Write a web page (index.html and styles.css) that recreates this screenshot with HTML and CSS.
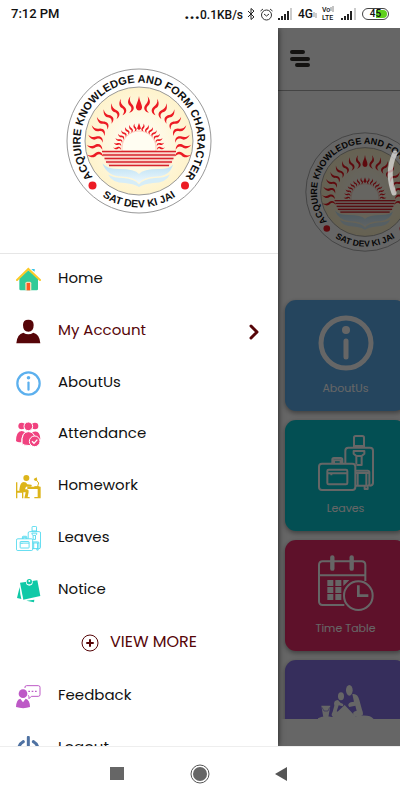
FILE: index.html
```html
<!DOCTYPE html>
<html lang="en">
<head>
<meta charset="utf-8">
<meta name="viewport" content="width=device-width, initial-scale=1">
<title>School app</title>
<link rel="stylesheet" href="styles.css">
</head>
<body>
<svg class="sprite" aria-hidden="true">
  <symbol id="info" viewBox="0 0 56 56">
    <circle cx="28" cy="28" r="25" fill="none" stroke="currentColor" stroke-width="5"/>
    <circle cx="28" cy="15" r="4" fill="currentColor"/>
    <path d="M28 26V42" stroke="currentColor" stroke-width="5" stroke-linecap="round"/>
  </symbol>
  <symbol id="luggage" viewBox="0 0 168 168">
    <g fill="none" stroke="currentColor" stroke-width="6" stroke-linejoin="round">
      <rect x="3" y="86" width="109" height="79" rx="9"/>
      <path d="M43 86V74Q43 69 48 69H68Q73 69 73 74V86M48 86V76H68V86"/>
      <rect x="28" y="104" width="60" height="44" rx="4"/><path d="M28 115H88M40 115V121"/>
      <path d="M82 84V47Q82 38 91 38H156Q165 38 165 47V144Q165 152 154 152"/>
      <path d="M108 38V8Q108 3 113 3H133Q138 3 138 8V38M108 33H138"/>
      <path d="M107 48H139V56L131 63H115L107 56ZM115 63V88M131 63V90H115"/>
      <path d="M112 107H149Q154 107 154 112V147Q154 152 149 152H112M112 114H154M119 114V152M145 114V152M140 152V162H149V152"/>
    </g>
  </symbol>
</svg>

<header class="status">
  <span>7:12 PM</span>
  <div class="status-right">
    <span class="speed"><b class="dots">...</b>0.1KB/s</span>
    <svg width="7" height="12" viewBox="0 0 7 12"><path d="M0 3L6 9L3 11.500V.5L6 3L0 9" fill="none" stroke="#222" stroke-width="1"/></svg>
    <svg width="13" height="13" viewBox="0 0 13 13" fill="none" stroke="#333"><circle cx="6.500" cy="7" r="5"/><path d="M.5 3L3 1M12.500 3L10 1M4 6L6.500 8L9 6"/></svg>
    <svg width="15" height="12" viewBox="0 0 15 12"><path d="M0 10h2v2H0zM3 8h2v4H3zM6 6h2v6H6zM9 3h2v9H9z" fill="#222"/><path d="M12 0h2v12h-2z" fill="#ccc"/></svg>
    <span class="net">4G<svg width="4" height="6" viewBox="0 0 4 6"><path d="M1 0V5M3 1V6" stroke="#999"/></svg></span>
    <span class="volte"><span class="vo">Vo<svg width="4" height="6" viewBox="0 0 4 6"><path d="M1 1V5M3 0V6" fill="none" stroke="#888"/></svg></span><span>LTE</span></span>
    <svg width="16" height="12" viewBox="0 0 16 12"><path d="M0 10h2v2H0zM3 8h2v4H3zM6 6h2v6H6zM9 3h2v9H9z" fill="#222"/><path d="M13 0h2v12h-2z" fill="#ccc"/></svg>
    <span class="battery">45</span>
  </div>
</header>

<main class="app">
  <aside class="drawer">
    <div class="drawer-head">
      <svg class="crest-large" viewBox="-146 -146 292 292" role="img" aria-label="School crest">
        <defs>
          <radialGradient id="glow"><stop offset="0" stop-color="#fffef8"/><stop offset="1" stop-color="#fef3cc"/></radialGradient>
          <linearGradient id="pages" x1="0" x2="0" y1="0" y2="1"><stop offset="0" stop-color="#b9dff3"/><stop offset="1" stop-color="#eef8fd"/></linearGradient>
          <path id="arc-top" d="M0 117A117 117 0 0 1 0-117A117 117 0 0 1 0 117"/>
          <path id="arc-bottom" d="M0-133A133 133 0 0 0 0 133A133 133 0 0 0 0-133"/>
          <path id="ray" d="M3-105C-5-98-6-91-1-86C2-81 0-77-6-73C4-74 7-80 4-87C0-93-1-98 3-105Z"/>
          <path id="mini" d="M1-52C-3-48-3-45-1-42C1-40 0-38-3-36C3-36 4-40 2-44C0-47 0-49 1-52Z"/>
          <g id="rays">
            <use href="#ray" transform="rotate(-11)"/><use href="#ray" transform="rotate(-22)"/><use href="#ray" transform="rotate(-33)"/><use href="#ray" transform="rotate(-44)"/><use href="#ray" transform="rotate(-55)"/><use href="#ray" transform="rotate(-66)"/><use href="#ray" transform="rotate(-77)"/><use href="#ray" transform="rotate(-88)"/><use href="#ray" transform="rotate(-99)"/>
          </g>
          <g id="minis">
            <use href="#mini" transform="rotate(-11)"/><use href="#mini" transform="rotate(-22)"/><use href="#mini" transform="rotate(-33)"/><use href="#mini" transform="rotate(-44)"/><use href="#mini" transform="rotate(-55)"/><use href="#mini" transform="rotate(-66)"/><use href="#mini" transform="rotate(-77)"/><use href="#mini" transform="rotate(-88)"/>
          </g>
        </defs>
        <g id="crest">
          <circle r="144" fill="#fff" stroke="#999" stroke-width="2"/>
          <circle r="108" fill="url(#glow)" stroke="#999" stroke-width="2"/>
          <g class="crest-text">
            <text class="motto"><textPath href="#arc-top" startOffset="50%">ACQUIRE KNOWLEDGE AND FORM CHARACTER</textPath></text>
            <text><textPath href="#arc-bottom" startOffset="50%">SAT DEV KI JAI</textPath></text>
          </g>
          <g fill="#ec1b24">
            <circle cx="-93" cy="89" r="8"/><circle cx="92" cy="89" r="8"/>
            <g transform="translate(0 14)">
              <use href="#rays"/><use href="#rays" transform="scale(-1 1)"/>
              <path d="M0-104C-1-94-7-86-6-80Q-4-75 0-75Q5-75 6-80C7-86 1-94 0-104Z"/>
            </g>
            <g transform="translate(0 16)">
              <use href="#minis"/><use href="#minis" transform="scale(-1 1)"/>
              <path d="M0-52L-4-41L0-38L4-41Z"/>
            </g>
          </g>
          <path d="M-34 20V14A34 34 0 0 1 34 14V20Z" fill="#fffdf2" stroke="#f4a08f" stroke-width="1"/>
          <path d="M-74 20H74L66 42L59 50H-59L-66 42Z" fill="#fbd8cd"/>
          <path d="M-74 21H74M-72 28H72M-69 35H69M-66 42H66M-60 49H60" stroke="#d8232c" stroke-width="3"/>
          <path d="M-73 45Q-64 56-40 56Q-8 56 0 66Q8 56 40 56Q62 56 68 47Q62 70 36 71Q10 71 0 84Q-10 71-36 71Q-64 70-73 45Z" fill="url(#pages)"/>
          <path d="M-62 67Q-50 74-32 74Q-8 76 0 87Q8 76 32 74Q50 74 62 67Q54 84 28 84Q8 86 0 92Q-8 86-28 84Q-54 84-62 67Z" fill="#d6edf8"/>
        </g>
      </svg>
    </div>
    <nav class="menu">
      <div class="menu-main">
        <a href="#"><svg viewBox="0 0 75 75"><path d="M10 34L37 10L66 34V66Q66 70 62 70H14Q10 70 10 66Z" fill="#31cb98"/><path d="M28 70V49Q28 44 33 44H42Q46 44 46 49V70Z" fill="#f9d9b4"/><path d="M32 70V48H42V70Z" fill="#ff5a22"/><path d="M3 39L37 6L72 39" fill="none" stroke="#fbca28" stroke-width="6" stroke-linecap="round"/><path d="M46 6H56V14L50 10Z" fill="#35c3e8"/></svg><span>Home</span></a>
        <a href="#" class="account"><svg viewBox="0 0 75 75"><path d="M21 18Q21 2 37 2T53 18Q53 38 37 38T21 18ZM1 73Q3 45 22 41Q37 50 52 41Q71 45 73 73Z" fill="currentColor"/></svg><span>My Account</span><svg class="chevron" viewBox="0 0 10 16"><path d="M2 2L8 8L2 14" fill="none" stroke="currentColor" stroke-width="3" stroke-linecap="round" stroke-linejoin="round"/></svg></a>
        <a href="#"><svg class="blue"><use href="#info"/></svg><span>AboutUs</span></a>
        <a href="#"><svg viewBox="0 0 75 75" fill="#f0427f"><circle cx="17" cy="12" r="10"/><circle cx="57" cy="12" r="10"/><path d="M0 57Q0 29 17 27Q24 28 27 31Q15 40 16 61Q3 61 0 57ZM48 31Q72 20 73 52L47 46Z"/><circle cx="37" cy="13" r="13" stroke="#fff" stroke-width="3"/><path d="M18 65Q16 29 37 29Q55 29 57 50L44 71Q22 71 18 65Z" stroke="#fff" stroke-width="3"/><circle cx="56" cy="58" r="16" stroke="#fff" stroke-width="3"/><path d="M48 58L54 64L64 53" fill="none" stroke="#fff" stroke-width="4"/></svg><span>Attendance</span></a>
        <a href="#"><svg viewBox="0 0 75 75" fill="#ddb51b"><circle cx="31" cy="12" r="9"/><path d="M10 47Q12 25 23 24Q31 24 34 31L46 32Q50 36 45 38H30L27 46H33Q39 47 38 54L35 69H41V73H25L29 55H15Q10 53 10 47Z"/><path d="M0 25H4V50H22V73H18V56H4V73H0ZM34 38H74V73H55V69H65V45H34ZM53 15L62 10L64 19L57 21Z"/><path d="M60 17L68 27L64 40M55 38H70" fill="none" stroke="#ddb51b" stroke-width="3"/></svg><span>Homework</span></a>
        <a href="#"><svg class="cyan"><use href="#luggage"/></svg><span>Leaves</span></a>
        <a href="#"><svg viewBox="0 0 75 75" fill="#10c9a7"><path d="M11 27L13 49L16 63L3 60ZM31 68L55 65L54 73Z"/><path d="M12 14L64 7L73 54L22 65Z"/><circle cx="40" cy="13" r="10" fill="#fff"/><circle cx="40" cy="11" r="8"/><circle cx="40" cy="9" r="3" fill="#fff"/></svg><span>Notice</span></a>
      </div>
      <button type="button" class="more"><svg viewBox="0 0 18 18" fill="none" stroke="currentColor"><circle cx="9" cy="9" r="8"/><path d="M9 6V12M6 9H12" stroke-width="2" stroke-linecap="round"/></svg><span>VIEW MORE</span></button>
      <a href="#"><svg viewBox="0 0 75 75" fill="#bd59c6"><circle cx="21" cy="29" r="13"/><path d="M0 69Q1 46 13 44L21 55L29 44Q42 48 42 69Q22 76 0 69Z"/><path d="M27 12V9Q27 5 32 5H67Q72 5 72 10V32Q72 37 67 37H46L39 44V37Q37 37 37 34" fill="none" stroke="#bd59c6" stroke-width="3"/><path d="M37 20h5v4h-5zM47 20h5v4h-5zM57 20h5v4h-5z"/></svg><span>Feedback</span></a>
      <a href="#"><svg viewBox="0 0 75 75"><path d="M37 4V36M22 17A30 30 0 1 0 52 17" fill="none" stroke="#4f72a2" stroke-width="9" stroke-linecap="round"/></svg><span>Logout</span></a>
    </nav>
  </aside>

  <section class="page">
    <div class="toolbar">
      <button type="button" aria-label="Menu"><svg width="20" height="18" viewBox="0 0 20 18"><path d="M2 2H13M2 9H18M7 15H18" stroke="#302e2a" stroke-width="4" stroke-linecap="round"/></svg></button>
    </div>
    <div class="content">
      <svg class="crest-small" viewBox="-146 -146 292 292" role="img" aria-label="School crest"><use href="#crest"/></svg>
      <div class="cards">
        <a href="#" class="card about"><svg><use href="#info"/></svg>AboutUs</a>
        <a href="#" class="card leaves"><svg><use href="#luggage"/></svg>Leaves</a>
        <a href="#" class="card timetable"><svg viewBox="0 0 168 168"><g fill="none" stroke="#fff" stroke-width="6"><path d="M79 150H14Q3 150 3 139V30Q3 19 14 19H131Q142 19 142 30V78M3 61H142"/><path d="M43 7V41M101 7V41" stroke-width="13" stroke-linecap="round"/><circle cx="121" cy="122" r="43"/><path d="M121 91V122H151" stroke-width="8"/></g><path d="M28 75h18v18H28zM52 75h18v18H52zM76 75h18l-8 8l-10 10zM28 96h18v18H28zM52 96h18v18H52zM28 117h18v18H28zM52 117h18v18H52z" fill="#fff"/></svg>Time Table</a>
        <a href="#" class="card activity" aria-label="Activity"><svg viewBox="0 30 168 168" fill="#fff"><path d="M0 168V160Q18 150 42 156L80 120L112 154Q158 146 168 164V168ZM10 122H37L31 157H16Z"/><ellipse cx="94" cy="76" rx="10" ry="16"/><ellipse cx="69" cy="94" rx="9" ry="12"/><path d="M103 87Q119 84 124 105L132 134Q140 152 128 153H108Q100 140 116 137L112 122L94 126Q86 118 98 112L108 110ZM60 105Q45 106 49 122L44 140Q36 155 48 153H62Q66 143 56 139L62 121L74 124Q80 117 68 114Z"/><path d="M12 127L18 138H30L35 127" fill="none" stroke="#8773e6" stroke-width="2"/></svg></a>
      </div>
    </div>
    <div class="scrim"></div>
    <svg class="swipe" width="12" height="48" viewBox="0 0 12 48"><path d="M8 3Q-1 22 7 43" fill="none" stroke="#fff" stroke-width="5" stroke-linecap="round"/></svg>
  </section>
</main>

<footer class="softkeys">
  <button type="button" aria-label="Recent apps"><svg viewBox="0 0 24 24"><path d="M5 5H19V18H5Z" fill="#666"/></svg></button>
  <button type="button" aria-label="Home screen"><svg viewBox="0 0 24 24"><circle cx="12" cy="12" r="9" fill="none" stroke="#555"/><circle cx="12" cy="12" r="7" fill="#666"/></svg></button>
  <button type="button" aria-label="Back"><svg viewBox="0 0 24 24"><path d="M4 12L16 5V19Z" fill="#555"/></svg></button>
</footer>
</body>
</html>
```
FILE: styles.css
```css
* { box-sizing: border-box; }
body {
  margin: 0;
  height: 100vh;
  display: flex;
  flex-direction: column;
  overflow: hidden;
  background: #fff;
  color: #111;
  font-family: Poppins, Inter, sans-serif;
}
a { color: inherit; text-decoration: none; }
button { padding: 0; border: 0; background: none; color: inherit; font: inherit; }
svg { display: block; flex: none; }
.sprite { position: absolute; width: 0; height: 0; }
.crest-text {
  font: bold 21px "Liberation Sans", sans-serif;
  fill: #111;
  text-anchor: middle;
}
.motto { font-size: 22px; }

.status {
  flex: none;
  height: 28px;
  padding: 0 11px;
  display: flex;
  align-items: center;
  justify-content: space-between;
  font: 500 13px/16px Roboto, sans-serif;
}
.status-right { display: flex; align-items: center; gap: 5px; }
.speed, .net { display: flex; align-items: baseline; font-size: 12px; }
.dots { font-size: 18px; line-height: 16px; }
.volte { width: 14px; display: flex; flex-direction: column; font: 500 7px/8px Roboto, sans-serif; }
.vo { display: flex; }
.battery {
  width: 27px;
  height: 12px;
  border: 1px solid #444;
  border-radius: 6px;
  background: linear-gradient(90deg, #fff 50%, #5fd01c 50%) content-box;
  padding: 1px;
  font-size: 10px;
  line-height: 8px;
  text-align: center;
}

.app { flex: 1; min-height: 0; display: flex; overflow: hidden; }
.drawer {
  flex: 0 0 278px;
  display: flex;
  flex-direction: column;
  overflow: hidden;
  z-index: 1;
  background: #fff;
  box-shadow: 0 0 6px rgba(0, 0, 0, .7);
}
.drawer-head {
  flex: none;
  padding: 40px 0 39px;
  display: flex;
  justify-content: center;
  border-bottom: 1px solid #e6e6e6;
}
.crest-large { width: 146px; height: 146px; }
.menu { display: flex; flex-direction: column; font-size: 15px; }
.menu-main { flex: none; height: 362px; display: grid; grid-auto-rows: 1fr; }
.menu a {
  min-height: 0;
  padding: 0 18px 0 16px;
  display: flex;
  align-items: center;
  gap: 17px;
}
.menu > a { flex: none; height: 52px; }
.menu a svg { width: 25px; height: 25px; }
.menu span { padding-bottom: 4px; }
.menu .account, .menu .more { color: #560508; }
.menu a .chevron { width: 12px; height: 16px; margin-left: auto; }
.blue { color: #5cb0ee; }
.cyan { color: #4dd9ee; }
.more {
  flex: none;
  height: 54px;
  display: flex;
  align-items: center;
  justify-content: center;
  gap: 11px;
  font-size: 16px;
}
.more svg { width: 18px; height: 18px; }

.page { position: relative; flex: 1; min-width: 0; display: flex; flex-direction: column; overflow: hidden; }
.toolbar { flex: none; height: 63px; padding-left: 12px; display: flex; align-items: center; border-bottom: 1px solid #aaa; }
.content { flex: 1; min-height: 0; margin-bottom: 27px; overflow: hidden; padding: 41px 0 0 7px; }
.crest-small { width: 120px; height: 120px; margin: 0 0 48px 20px; }
.cards { display: grid; grid-template-columns: 121px; gap: 9px; }
.card {
  height: 111px;
  padding-top: 15px;
  display: flex;
  flex-direction: column;
  align-items: center;
  gap: 9px;
  border-radius: 11px;
  box-shadow: 0 2px 5px rgba(0, 0, 0, .4);
  color: #fff;
  font-size: 11px;
  line-height: 16px;
}
.card svg { width: 56px; height: 56px; }
.about { background: #5dadec; }
.leaves { background: #08c6d0; }
.timetable { background: #ec2b6a; }
.activity { background: #8773e6; }
.scrim { position: absolute; inset: 0; background: rgba(0, 0, 0, .6); }
.swipe { position: absolute; top: 122px; right: 1px; opacity: .6; }

.softkeys {
  flex: none;
  height: 54px;
  display: flex;
  align-items: center;
  justify-content: center;
  gap: 59px;
  border-top: 1px solid #eee;
}
.softkeys svg { width: 24px; height: 24px; }
```
